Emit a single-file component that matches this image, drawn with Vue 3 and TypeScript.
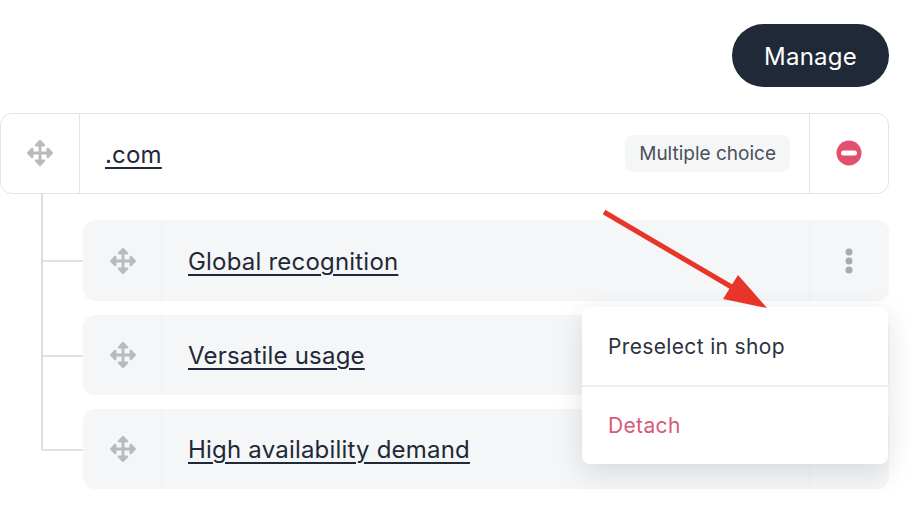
<script setup lang="ts">
const move = "M352.201 425.775l-79.196 79.196c-9.373 9.373-24.568 9.373-33.941 0l-79.196-79.196c-15.119-15.119-4.411-40.971 16.971-40.97h51.162L228 284H127.196v51.162c0 21.382-25.851 32.09-40.971 16.971L7.029 272.937c-9.373-9.373-9.373-24.569 0-33.941L86.225 159.8c15.119-15.119 40.971-4.411 40.971 16.971V228H228V127.196h-51.23c-21.382 0-32.09-25.851-16.971-40.971l79.196-79.196c9.373-9.373 24.568-9.373 33.941 0l79.196 79.196c15.119 15.119 4.411 40.971-16.971 40.971h-51.162V228h100.804v-51.162c0-21.382 25.851-32.09 40.97-16.971l79.196 79.196c9.373 9.373 9.373 24.569 0 33.941L425.773 352.2c-15.119 15.119-40.971 4.411-40.97-16.971V284H284v100.804h51.23c21.382 0 32.09 25.851 16.971 40.971z";
const children: string[] = ["Global recognition", "Versatile usage", "High availability demand"];
</script>

<template>
  <div class="page">
    <div class="top">
      <button class="manage">Manage</button>
    </div>
    <div class="row root">
      <div class="handle root-handle">
        <svg class="move" viewBox="0 0 512 512"><path :d="move" /></svg>
      </div>
      <div class="main">
        <a class="name">.com</a>
        <span class="tag">Multiple choice</span>
      </div>
      <div class="action">
        <svg class="minus" viewBox="0 0 26 26">
          <circle cx="13" cy="13" r="12.5" fill="#e2506f" />
          <rect x="5" y="10.5" width="16" height="5" rx="2.5" fill="#fff" />
        </svg>
      </div>
    </div>
    <div class="children">
      <div v-for="(child, i) in children" :key="child" class="child-wrap">
        <span class="branch"></span>
        <div class="row child">
          <div class="handle child-handle">
            <svg class="move" viewBox="0 0 512 512"><path :d="move" /></svg>
          </div>
          <div class="main">
            <a class="name">{{ child }}</a>
          </div>
          <div class="action">
            <svg v-if="i === 0" class="dots" viewBox="0 0 8 28">
              <circle cx="4" cy="5" r="3.5" />
              <circle cx="4" cy="14" r="3.5" />
              <circle cx="4" cy="23" r="3.5" />
            </svg>
          </div>
        </div>
      </div>
      <span class="trunk"></span>
    </div>
    <div class="menu">
      <div class="menu-item first">Preselect in shop</div>
      <div class="menu-item danger">Detach</div>
    </div>
    <svg class="arrow" width="914" height="532" viewBox="0 0 914 532">
      <line x1="604" y1="212" x2="735" y2="289" stroke="#e8352a" stroke-width="5" />
      <polygon points="738,275 723,299 767,308" fill="#e8352a" />
    </svg>
  </div>
</template>

<style>
html, body { margin: 0; background: #fff; }
</style>

<style scoped>
.page {
  position: relative;
  width: 914px;
  height: 532px;
  overflow: hidden;
  box-sizing: border-box;
  padding: 24px 25px 0 0;
  font-family: Inter, "Liberation Sans", sans-serif;
  color: #1f2937;
}
.top { display: flex; justify-content: flex-end; }
.manage {
  width: 157px;
  height: 63px;
  border: 0;
  border-radius: 32px;
  background: #1f2937;
  color: #fff;
  font: 400 24px Inter, "Liberation Sans", sans-serif;
  letter-spacing: 0.25px;
  padding: 2px 0 0;
}
.row {
  display: flex;
  box-sizing: border-box;
  border-radius: 12px;
}
.root {
  margin-top: 26px;
  height: 81px;
  border: 1px solid #e3e4e6;
  background: #fff;
}
.handle {
  display: flex;
  align-items: center;
  justify-content: center;
  flex: none;
  box-sizing: border-box;
}
.root-handle { width: 79px; border-right: 1px solid #e3e4e6; padding-bottom: 2px; }
.child-handle { width: 79px; border-right: 1px solid #eeeff1; padding-left: 1px; }
.move { width: 26px; height: 26px; fill: #b9babb; }
.main {
  flex: 1;
  display: flex;
  align-items: center;
  justify-content: space-between;
  padding: 0 19px 0 26px;
}
.name {
  font-size: 24px;
  letter-spacing: 0.2px;
  text-decoration: underline;
  text-underline-offset: 4px;
  text-decoration-thickness: 1.5px;
  color: #1f2937;
}
.root .name { margin-top: 2px; margin-left: -1px; }
.child-wrap:first-child .name { margin-top: 1px; }
.tag {
  padding: 0 14px;
  height: 37px;
  line-height: 37px;
  border-radius: 8px;
  background: #f5f6f8;
  font-size: 19px;
  color: #4b5158;
  margin-bottom: 1px;
}
.action {
  width: 79px;
  flex: none;
  display: flex;
  align-items: center;
  justify-content: center;
  box-sizing: border-box;
}
.root .action { border-left: 1px solid #e3e4e6; padding-bottom: 2px; }
.child .action { border-left: 1px solid #eeeff1; width: 80px; padding-right: 1px; }
.minus { width: 26px; height: 26px; }
.dots { width: 8px; height: 28px; fill: #a9aaab; }
.children {
  position: relative;
  display: flex;
  flex-direction: column;
  gap: 14px;
  margin-top: 26px;
  padding-left: 83px;
}
.child-wrap { position: relative; }
.child { height: 80px; background: #f5f6f8; }
.child-wrap:first-child .child { height: 81px; }
.branch {
  position: absolute;
  left: -41px;
  top: 40px;
  width: 41px;
  height: 1.5px;
  background: #e0e1e3;
}
.trunk {
  position: absolute;
  left: 41px;
  top: -26px;
  width: 1.5px;
  height: 256px;
  background: #dcdddf;
}
.menu {
  position: absolute;
  left: 582px;
  top: 307px;
  width: 306px;
  height: 157px;
  border-radius: 8px;
  background: #fff;
  box-shadow: 0 8px 28px rgba(30, 40, 55, 0.14);
  display: flex;
  flex-direction: column;
}
.menu-item {
  flex: 1;
  display: flex;
  align-items: center;
  padding: 0 26px;
  font-size: 21px;
  letter-spacing: 0.35px;
  color: #2b3440;
}
.first { border-bottom: 2px solid #eeeff1; padding-top: 1px; }
.danger { color: #d75a76; }
.arrow { position: absolute; left: 0; top: 0; pointer-events: none; }
</style>
